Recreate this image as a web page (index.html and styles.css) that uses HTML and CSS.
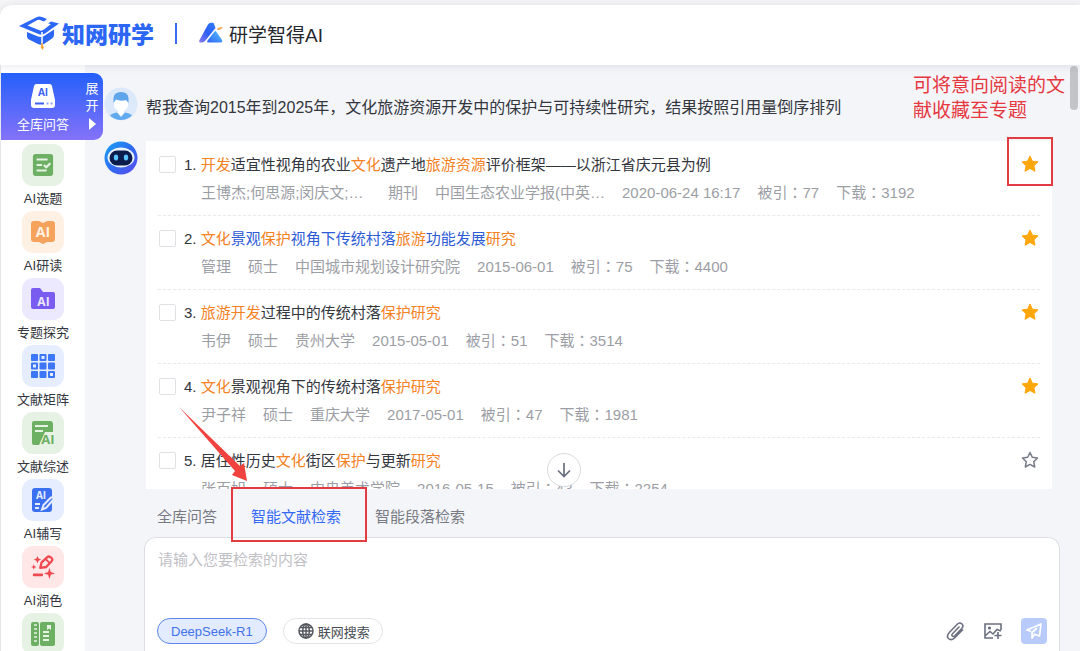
FILE: index.html
```html
<!DOCTYPE html>
<html lang="zh-CN">
<head>
  <meta charset="UTF-8">
  <meta name="viewport" content="width=device-width, initial-scale=1">
  <title>知网研学 - 研学智得AI</title>
  <link rel="stylesheet" href="styles.css">
</head>
<body>
  <header class="header">
    <a class="brand" href="#">
      <svg width="42" height="36" viewBox="0 0 42 36">
        <path d="M1 11 18 2.500Q21 1 24 2L29 4 26 6.500 22 5Q20.500 4.500 19 5.300L9.500 10.500 22 15.500Q24 16 26 14.500L33 9 30 8.500 33 6.500 41 8.500 27 18.500Q24 20.500 20.500 19Z" fill="#2c66f5"/>
        <path d="M9 17 20 21.500Q23 22.500 26 21L36 14.500V20Q36 22 34 23.500L26 29Q23 30.500 20 29L11 24.500Q9 23.500 9 21.500Z" fill="#2c66f5"/>
        <path d="M24 17V29" stroke="#fff" stroke-width="1.500"/>
        <path d="M24 28V31" stroke="#f4a23a" stroke-width="1.500"/>
        <path d="M24 30 26 32 24.500 35 22.500 32Z" fill="#f4a23a"/>
      </svg>
      <span>知网研学</span>
    </a>
    <span class="divider"></span>
    <a class="product" href="#">
      <svg width="24" height="22" viewBox="0 0 24 22">
        <defs>
          <linearGradient id="lg1" x1="0" y1="1" x2="1" y2="0"><stop offset="0" stop-color="#8a7bf5"/><stop offset=".5" stop-color="#2d5ff2"/><stop offset="1" stop-color="#2f7bf7"/></linearGradient>
          <linearGradient id="lg2" x1="0" y1="1" x2="1" y2="0"><stop offset="0" stop-color="#2f62f4"/><stop offset="1" stop-color="#58c3ff"/></linearGradient>
        </defs>
        <path d="M1.500 20.500Q-.5 20.500.5 18L9 2.500Q10 .8 12 .8H14.500L16.500 6 6 19Q4.500 20.700 1.500 20.500Z" fill="url(#lg1)"/>
        <path d="M15.500 9.500Q16.500 8.500 17.500 10L23 18Q24 20.500 21.500 20.500H9.500Q7.500 20.500 8.500 18.500Z" fill="url(#lg2)"/>
        <path d="M18 8Q18 5 23.500 5Q23 8.500 18 8Z" fill="#f8a857"/>
      </svg>
      <span>研学智得AI</span>
    </a>
  </header>

  <div class="layout">
    <nav class="sidebar">
      <a class="side-active" href="#">
        <span class="side-main">
          <svg width="26" height="26" viewBox="0 0 26 26">
            <path d="M6.500 1H19.500Q21.500 1 22 3L25 17V22Q25 25 22 25H4Q1 25 1 22V17L4 3Q4.500 1 6.500 1Z" fill="#fff"/>
            <text x="13" y="13" class="glyph" font-size="10" text-anchor="middle" fill="#3c62f4">AI</text>
            <path d="M5 20.500H14" stroke="#3c62f4" stroke-width="2"/>
            <path d="M16.500 20.500H18.500M20.500 20.500H22.500" stroke="#8fa3f8" stroke-width="2"/>
          </svg>
          <span>全库问答</span>
        </span>
        <span class="side-expand">展<br>开
          <svg width="8" height="12" viewBox="0 0 8 12"><path d="M1 0 8 6 1 12Z" fill="#fff"/></svg>
        </span>
      </a>
      <a class="side-item" href="#">
        <span class="side-icon green">
          <svg width="22" height="24" viewBox="0 0 24 26">
            <rect x="1" y="1" width="22" height="24" rx="3" fill="#6db063"/>
            <path d="M5 7H17M5 13H11M5 19H16M13 13 15.500 15.500 20 11" fill="none" stroke="#e6f2e3" stroke-width="2.400"/>
          </svg>
        </span>
        <span>AI选题</span>
      </a>
      <a class="side-item" href="#">
        <span class="side-icon orange">
          <svg width="24" height="24" viewBox="0 0 24 24">
            <path d="M3 1H8L12 3 16 1H21Q24 1 24 4V19Q24 22 21 22H16L12 24 8 22H3Q0 22 0 19V4Q0 1 3 1Z" fill="#f5a25d"/>
            <text x="12" y="17" class="glyph" font-size="14" text-anchor="middle" fill="#fff1e6">AI</text>
          </svg>
        </span>
        <span>AI研读</span>
      </a>
      <a class="side-item" href="#">
        <span class="side-icon purple">
          <svg width="24" height="22" viewBox="0 0 24 22">
            <path d="M2 0H9L12 4H22Q24 4 24 6V19Q24 21 22 21H2Q0 21 0 19V2Q0 0 2 0Z" fill="#7a5cf0"/>
            <text x="12.500" y="17.500" class="glyph" font-size="12" text-anchor="middle" fill="#ece8fd">AI</text>
          </svg>
        </span>
        <span>专题探究</span>
      </a>
      <a class="side-item" href="#">
        <span class="side-icon blue">
          <svg width="24" height="24" viewBox="0 0 24 24">
            <g fill="#3d76f7">
              <rect width="7" height="7" rx="1"/><rect x="8.500" width="7" height="7" rx="1"/><rect x="17" width="7" height="7" rx="1"/>
              <rect y="8.500" width="7" height="7" rx="1"/><rect x="8.500" y="8.500" width="7" height="7" rx="1"/><rect x="17" y="8.500" width="7" height="7" rx="1"/>
              <rect y="17" width="7" height="7" rx="1"/><rect x="8.500" y="17" width="7" height="7" rx="1"/><rect x="17" y="17" width="7" height="7" rx="1"/>
            </g>
            <g fill="#e6edfe"><rect x="10.500" y="2" width="3" height="3"/><rect x="2" y="10.500" width="3" height="3"/><rect x="19" y="19" width="3" height="3"/></g>
          </svg>
        </span>
        <span>文献矩阵</span>
      </a>
      <a class="side-item" href="#">
        <span class="side-icon green">
          <svg width="24" height="24" viewBox="0 0 24 24">
            <path d="M3 0H19Q22 0 22 3V11H14L8 24H3Q1 24 1 22V2Q1 0 3 0Z" fill="#6db063"/>
            <path d="M4 5H17M4 10H12" stroke="#e6f2e3" stroke-width="2"/>
            <text x="17" y="23" class="glyph" font-size="13" text-anchor="middle" fill="#6db063">AI</text>
          </svg>
        </span>
        <span>文献综述</span>
      </a>
      <a class="side-item" href="#">
        <span class="side-icon blue">
          <svg width="24" height="24" viewBox="0 0 24 24">
            <rect x="1" width="20" height="24" rx="3" fill="#3d70f0"/>
            <text x="10" y="11" class="glyph" font-size="10" text-anchor="middle" fill="#e6edfe">AI</text>
            <path d="M4 16H9M4 20H8" stroke="#e6edfe" stroke-width="2"/>
            <path d="M11 21.500 12.500 17 20 9.500Q22 9 23 11L15 20Z" fill="#3d70f0" stroke="#e6edfe" stroke-width="2"/>
          </svg>
        </span>
        <span>AI辅写</span>
      </a>
      <a class="side-item" href="#">
        <span class="side-icon red">
          <svg width="24" height="24" viewBox="0 0 26 26" fill="#ee4a50">
            <path d="M10 14 11.500 8 18 2Q20 1 22 3T22.500 6.500L16.500 13Z" fill="none" stroke="#ee4a50" stroke-width="2.500" stroke-linejoin="round"/>
            <path d="M16 4.500 20 8.500" stroke="#ee4a50" stroke-width="2"/>
            <path d="M7 1 8.200 3.800 11 5 8.200 6.200 7 9 5.800 6.200 3 5 5.800 3.800ZM3 10 3.800 12.200 6 13 3.800 13.800 3 16 2.200 13.800 0 13 2.200 12.200ZM20 14 21.500 18.500 26 20 21.500 21.500 20 26 18.500 21.500 14 20 18.500 18.500Z"/>
            <rect x="2" y="20" width="11" height="3" rx="1"/>
          </svg>
        </span>
        <span>AI润色</span>
      </a>
      <a class="side-item" href="#" aria-label="AI翻译">
        <span class="side-icon green">
          <svg width="24" height="24" viewBox="0 0 24 24">
            <rect width="8" height="24" rx="2" fill="#6db063"/>
            <rect x="9" width="15" height="24" rx="2" fill="#6db063"/>
            <path d="M3 3H6M3 7H6M3 11H6M3 15H6M3 19H6" stroke="#e6f2e3" stroke-width="1.500"/>
            <path d="M12 10H18M12 14H18M12 18H18" stroke="#e6f2e3" stroke-width="2"/>
            <path d="M16 3H20V8L18 6.500 16 8Z" fill="#e6f2e3"/>
          </svg>
        </span>
      </a>
    </nav>

    <main class="main">
      <div class="question">
        <svg class="avatar" width="34" height="34" viewBox="0 0 34 34">
          <defs><clipPath id="face"><circle cx="17" cy="17" r="16"/></clipPath></defs>
          <circle cx="17" cy="17" r="16.500" fill="#dbe9fa"/>
          <g clip-path="url(#face)">
            <path d="M4 34Q5 26 13 25.500L17 30 21 25.500Q29 26 30 34Z" fill="#62aaf0"/>
            <path d="M14 21H20V26L17 29 14 26Z" fill="#fff"/>
            <path d="M10 12H24V17Q24 24 17 24.500Q10 24 10 17Z" fill="#fff"/>
            <path d="M9.500 16V11Q10 5 17 5Q24 5 24.500 11V16L22 13Q16 14.500 12 12.500Z" fill="#5ea5ec"/>
          </g>
        </svg>
        <p>帮我查询2015年到2025年，文化旅游资源开发中的保护与可持续性研究，结果按照引用量倒序排列</p>
      </div>

      <div class="answer">
        <svg class="avatar" width="34" height="34" viewBox="0 0 34 34">
          <defs><linearGradient id="bot" x1="0" y1="0" x2="1" y2="1"><stop offset="0" stop-color="#16a5f2"/><stop offset=".5" stop-color="#2f6bf0"/><stop offset="1" stop-color="#5c4bee"/></linearGradient></defs>
          <circle cx="17" cy="17" r="16.500" fill="url(#bot)"/>
          <ellipse cx="17" cy="16.500" rx="13.500" ry="10" fill="#eaf4ff"/>
          <rect x="5.500" y="9.500" width="23" height="15" rx="7.500" fill="#0c1d4d"/>
          <ellipse cx="12" cy="16.500" rx="2.200" ry="3" fill="#5cc4ff"/>
          <ellipse cx="22" cy="16.500" rx="2.200" ry="3" fill="#5cc4ff"/>
        </svg>

        <div class="results">
          <ol class="list">
            <li class="item">
              <input type="checkbox" id="p1">
              <div class="info">
                <label for="p1" class="title">1. <em>开发</em>适宜性视角的农业<em>文化</em>遗产地<em>旅游资源</em>评价框架——以浙江省庆元县为例</label>
                <div class="meta"><span class="cut">王博杰;何思源;闵庆文;…</span><span>期刊</span><span class="cut">中国生态农业学报(中英…</span><span>2020-06-24 16:17</span><span>被引<i lang="ja">：</i>77</span><span>下载<i lang="ja">：</i>3192</span></div>
              </div>
              <button class="star on" aria-label="收藏"><svg width="18" height="18" viewBox="0 0 18 18"><path d="M9 1 11.400 6.200 17 6.900 12.900 10.700 14 16.300 9 13.500 4 16.300 5.100 10.700 1 6.900 6.600 6.200Z"/></svg></button>
            </li>
            <li class="item">
              <input type="checkbox" id="p2">
              <div class="info">
                <label for="p2" class="title">2. <span class="hover"><em>文化</em>景观<em>保护</em>视角下传统村落<em>旅游</em>功能发展<em>研究</em></span></label>
                <div class="meta"><span>管理</span><span>硕士</span><span>中国城市规划设计研究院</span><span>2015-06-01</span><span>被引<i lang="ja">：</i>75</span><span>下载<i lang="ja">：</i>4400</span></div>
              </div>
              <button class="star on" aria-label="收藏"><svg width="18" height="18" viewBox="0 0 18 18"><path d="M9 1 11.400 6.200 17 6.900 12.900 10.700 14 16.300 9 13.500 4 16.300 5.100 10.700 1 6.900 6.600 6.200Z"/></svg></button>
            </li>
            <li class="item">
              <input type="checkbox" id="p3">
              <div class="info">
                <label for="p3" class="title">3. <em>旅游开发</em>过程中的传统村落<em>保护研究</em></label>
                <div class="meta"><span>韦伊</span><span>硕士</span><span>贵州大学</span><span>2015-05-01</span><span>被引<i lang="ja">：</i>51</span><span>下载<i lang="ja">：</i>3514</span></div>
              </div>
              <button class="star on" aria-label="收藏"><svg width="18" height="18" viewBox="0 0 18 18"><path d="M9 1 11.400 6.200 17 6.900 12.900 10.700 14 16.300 9 13.500 4 16.300 5.100 10.700 1 6.900 6.600 6.200Z"/></svg></button>
            </li>
            <li class="item">
              <input type="checkbox" id="p4">
              <div class="info">
                <label for="p4" class="title">4. <em>文化</em>景观视角下的传统村落<em>保护研究</em></label>
                <div class="meta"><span>尹子祥</span><span>硕士</span><span>重庆大学</span><span>2017-05-01</span><span>被引<i lang="ja">：</i>47</span><span>下载<i lang="ja">：</i>1981</span></div>
              </div>
              <button class="star on" aria-label="收藏"><svg width="18" height="18" viewBox="0 0 18 18"><path d="M9 1 11.400 6.200 17 6.900 12.900 10.700 14 16.300 9 13.500 4 16.300 5.100 10.700 1 6.900 6.600 6.200Z"/></svg></button>
            </li>
            <li class="item">
              <input type="checkbox" id="p5">
              <div class="info">
                <label for="p5" class="title">5. 居住性历史<em>文化</em>街区<em>保护</em>与更新<em>研究</em></label>
                <div class="meta"><span>张百旭</span><span>硕士</span><span>中央美术学院</span><span>2016-05-15</span><span>被引<i lang="ja">：</i>43</span><span>下载<i lang="ja">：</i>2254</span></div>
              </div>
              <button class="star" aria-label="收藏"><svg width="18" height="18" viewBox="0 0 18 18"><path d="M9 1.500 11.300 6.300 16.500 7 12.700 10.700 13.700 16 9 13.400 4.300 16 5.300 10.700 1.500 7 6.700 6.300Z"/></svg></button>
            </li>
          </ol>
          <button class="to-bottom" aria-label="回到底部">
            <svg width="16" height="16" viewBox="0 0 16 16"><path d="M8 1V14M2 8.500 8 14.500 14 8.500" fill="none" stroke="#6b7080" stroke-width="1.700"/></svg>
          </button>
        </div>
      </div>

      <div class="tabs">
        <button>全库问答</button>
        <button class="active">智能文献检索</button>
        <button>智能段落检索</button>
      </div>

      <div class="composer">
        <textarea placeholder="请输入您要检索的内容" aria-label="检索内容"></textarea>
        <div class="tools">
          <button class="pill model">DeepSeek-R1</button>
          <button class="pill">
            <svg width="16" height="16" viewBox="0 0 16 16" fill="none" stroke="#55585f" stroke-width="1.500"><circle cx="8" cy="8" r="7"/><ellipse cx="8" cy="8" rx="3.300" ry="7"/><path d="M8 1V15M1 8H15M2 4.500H14M2 11.500H14"/></svg>
            联网搜索
          </button>
          <span class="space"></span>
          <button class="tool" aria-label="附件">
            <svg width="20" height="20" viewBox="0 0 20 20" fill="none" stroke="#6c7080" stroke-width="1.600" stroke-linecap="round"><path d="M14 6 7.500 12.800Q6.300 14 7.300 15T9.800 14.800L16.800 7.500Q19 5 17 3T12.500 3L4.500 11.200Q1 15 3.500 17.500T9.500 17L17.500 9"/></svg>
          </button>
          <button class="tool" aria-label="图片">
            <svg width="20" height="20" viewBox="0 0 20 20" fill="none" stroke="#6c7080" stroke-width="1.600"><path d="M18 9V3H2V17H10M2.500 14.500 7 10.500 10 13 14 8.500 18 10M15 11V18M11.500 14.500H18.500"/><circle cx="6.500" cy="7" r=".8"/></svg>
          </button>
          <button class="send" aria-label="发送">
            <svg width="18" height="18" viewBox="0 0 18 18" fill="none" stroke="#fff" stroke-width="1.700" stroke-linejoin="round"><path d="M6 9.500 2 8 16 2 14.500 14 9.500 12.200 7 16V10.500L12 6"/></svg>
          </button>
        </div>
      </div>
      <span class="scroll-thumb"></span>
    </main>
  </div>

  <!-- 操作说明标注 -->
  <p class="note">可将意向阅读的文献收藏至专题</p>
  <span class="mark mark-star"></span>
  <span class="mark mark-tab"></span>
  <svg class="arrow" width="70" height="76" viewBox="0 0 70 76"><path d="M0 0 61 59 65 56 68 74 53 68 56 64Z" fill="#f0423f"/></svg>
</body>
</html>
```
FILE: styles.css
```css
* { box-sizing: border-box; margin: 0; padding: 0; }
body {
  display: flex;
  flex-direction: column;
  height: 100vh;
  position: relative;
  overflow: hidden;
  background: #f5f5f7;
  color: #33363d;
  font-family: "Liberation Sans", "Noto Sans CJK SC", sans-serif;
  font-size: 15px;
}
a { color: inherit; text-decoration: none; }
button { border: 0; background: none; color: inherit; font: inherit; cursor: pointer; }
svg { display: block; flex: none; }
.glyph { font-family: "Open Sans", sans-serif; font-weight: 700; }

/* 顶部 */
.header {
  display: flex;
  align-items: center;
  flex: none;
  height: 60px;
  margin-top: 5px;
  padding: 0 18px 4px;
  background: #fff;
  border-radius: 12px 0 0 0;
  box-shadow: 0 1px 8px rgba(40, 50, 70, .12);
  position: relative;
  z-index: 1;
}
.brand { display: flex; align-items: center; gap: 2px; color: #2c66f5; font-size: 23px; font-weight: 900; }
.divider { width: 2px; height: 21px; margin: 0 22px 0 21px; background: #3a6cf0; }
.product { display: flex; align-items: center; gap: 6px; font-size: 19px; color: #25272c; }

.layout { display: flex; flex: 1; min-height: 0; }

/* 侧边栏 */
.sidebar {
  display: flex;
  flex-direction: column;
  align-items: center;
  flex: none;
  width: 85px;
  padding-top: 8px;
  background: #fff;
  border-left: 1px solid #e6e7ea;
  font-size: 13px;
}
.side-active {
  display: flex;
  flex: none;
  align-self: flex-start;
  width: 102px;
  height: 67px;
  margin-bottom: 4px;
  border-radius: 0 9px 9px 0;
  background: linear-gradient(#2460fb, #8572f9);
  color: #fff;
  z-index: 1;
}
.side-main { display: flex; flex-direction: column; align-items: center; width: 84px; padding-top: 10px; line-height: 32px; }
.side-expand { display: flex; flex-direction: column; align-items: center; width: 14px; padding-top: 7px; line-height: 17px; }
.side-expand svg { margin-top: 4px; }
.side-item { display: flex; flex-direction: column; align-items: center; flex: none; line-height: 25px; }
.side-icon { display: flex; align-items: center; justify-content: center; width: 42px; height: 42px; border-radius: 11px; }
.green { background: #e6f2e3; }
.orange { background: #fff0e4; }
.purple { background: #ece8fd; }
.blue { background: #e6edfe; }
.red { background: #ffe6e7; }

/* 对话区 */
.main {
  display: flex;
  flex-direction: column;
  flex: 1;
  min-width: 0;
  position: relative;
  padding: 22px 20px 0 19px;
  background: #f4f5f9;
}
.question { display: flex; gap: 8px; flex: none; height: 54px; font-size: 16px; line-height: 42px; }
.answer { display: flex; gap: 8px; flex: 1; min-height: 0; padding-right: 8px; }
.avatar { flex: none; }
.results { flex: 1; min-width: 0; position: relative; overflow: hidden; background: #fff; }
.list { list-style: none; padding: 1px 12px 0; }
.item { display: flex; align-items: flex-start; padding: 9px 0 8px; border-bottom: 1px dashed #e8e9ed; line-height: 28px; }
.item input {
  appearance: none;
  flex: none;
  width: 17px;
  height: 17px;
  margin: 5px 8px 0 1px;
  border: 1px solid #e0e1e5;
  border-radius: 2px;
  background: #fff;
}
.info { flex: 1; min-width: 0; }
.title { display: block; }
.title em { color: #f5811f; font-style: normal; }
.hover { color: #2d5bd7; }
.meta { display: flex; gap: 17px; padding-left: 17px; color: #9c9ea5; white-space: nowrap; }
.meta i { font-family: "Noto Sans CJK JP", sans-serif; font-style: normal; line-height: 1; }
.cut { width: 170px; overflow: hidden; }
.star { padding: 4px 1px; }
.star svg { fill: none; stroke: #777b88; stroke-width: 1.500; stroke-linejoin: round; }
.star.on svg { fill: #ffa60a; stroke: #ffa60a; stroke-width: 1; }
.to-bottom {
  display: flex;
  align-items: center;
  justify-content: center;
  position: absolute;
  right: calc(54% - 18px);
  bottom: 2px;
  width: 34px;
  height: 34px;
  border: 1px solid #d9dadf;
  border-radius: 50%;
  background: #fff;
}

/* 底部输入 */
.tabs { display: flex; gap: 34px; flex: none; height: 48px; padding: 4px 0 0 53px; color: #777a82; }
.tabs .active { color: #3469f5; }
.composer {
  flex: none;
  margin-left: 40px;
  padding: 7px 12px;
  background: #fff;
  border: 1px solid #dddfe4;
  border-bottom: 0;
  border-radius: 12px 12px 0 0;
}
.composer textarea { display: block; width: 100%; height: 73px; padding: 0 1px; border: 0; outline: 0; resize: none; background: none; font: inherit; line-height: 30px; }
.composer textarea::placeholder { color: #bfc1c6; }
.tools { display: flex; align-items: center; }
.pill {
  display: flex;
  align-items: center;
  gap: 4px;
  height: 26px;
  margin-right: 16px;
  padding: 0 12px 0 14px;
  border: 1px solid #e3e4e8;
  border-radius: 13px;
  color: #4a4d55;
  font-size: 13px;
}
.model { padding: 0 13px; border-color: #5d86ee; background: #e3ebfe; color: #4272ea; }
.space { flex: 1; }
.tool { margin-right: 18px; }
.send { display: flex; align-items: center; justify-content: center; width: 26px; height: 26px; border-radius: 4px; background: #b9cbfb; }
.scroll-thumb { position: absolute; top: 1px; right: 2px; width: 8px; height: 44px; border-radius: 4px; background: #c3c4c8; }

/* 标注 */
.note { position: absolute; top: 73px; right: 14px; width: 153px; color: #e5383f; font-size: 19px; line-height: 25px; z-index: 2; }
.mark { position: absolute; border: 2px solid #e23c42; z-index: 2; }
.mark-star { top: 137px; right: 27px; width: 46px; height: 49px; }
.mark-tab { left: 231px; bottom: 109px; width: 136px; height: 55px; }
.arrow { position: absolute; left: 179px; bottom: 168px; z-index: 2; }
```
